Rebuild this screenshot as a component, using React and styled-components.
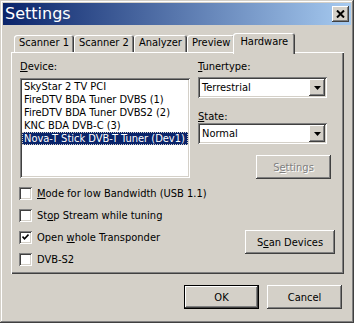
import styled, { createGlobalStyle } from 'styled-components';

const FONT = `"DejaVu Sans Condensed", "DejaVu Sans", sans-serif`;

const GlobalStyle = createGlobalStyle`
  * {
    box-sizing: border-box;
    margin: 0;
    padding: 0;
  }

  body {
    font-family: ${FONT};
    font-stretch: condensed;
    font-size: 11px;
    background: #d4d0c8;
    color: #000;
  }
`;

const raised = `
  box-shadow: inset -1px -1px #404040, inset 1px 1px #ffffff,
    inset -2px -2px #808080, inset 2px 2px #d4d0c8;
`;

const sunken = `
  box-shadow: inset 1px 1px #808080, inset -1px -1px #ffffff,
    inset 2px 2px #404040, inset -2px -2px #d4d0c8;
`;

const Window = styled.div`
  width: 354px;
  height: 323px;
  padding: 3px;
  background: #d4d0c8;
  display: flex;
  flex-direction: column;
  box-shadow: inset -1px -1px #404040, inset 1px 1px #d4d0c8,
    inset -2px -2px #808080, inset 2px 2px #ffffff;
`;

const TitleBar = styled.div`
  height: 22px;
  display: flex;
  align-items: center;
  justify-content: space-between;
  padding: 0 2px 0 2px;
  background: linear-gradient(to right, #0a246a, #a6caf0);
`;

const Title = styled.span`
  font-family: "DejaVu Sans", sans-serif;
  font-stretch: normal;
  font-size: 16px;
  color: #fff;
  line-height: 22px;
`;

const CloseButton = styled.div`
  width: 17px;
  height: 16px;
  background: #d4d0c8;
  display: flex;
  align-items: center;
  justify-content: center;
  ${raised}
`;

const Body = styled.div`
  flex: 1;
  padding: 8px 7px 0 8px;
  display: flex;
  flex-direction: column;
`;

const TabStrip = styled.div`
  height: 19px;
  display: flex;
  align-items: flex-end;
  padding-left: 3px;
`;

const Tab = styled.div`
  position: relative;
  height: ${p => (p.$active ? '21px' : '17px')};
  margin: ${p => (p.$active ? '0 -2px -2px -2px' : '0')};
  z-index: ${p => (p.$active ? 2 : 1)};
  padding: ${p => (p.$active ? '2px 7px 0' : '1px 5px 0')};
  background: #d4d0c8;
  border-radius: 3px 3px 0 0;
  line-height: 14px;
  box-shadow: inset 1px 1px #ffffff, inset -1px 0 #404040, inset -2px 0 #808080;
  white-space: nowrap;
`;

const Panel = styled.div`
  height: 222px;
  padding: 8px 9px 0 9px;
  display: flex;
  flex-direction: column;
  box-shadow: inset 1px 1px #ffffff, inset -1px -1px #404040,
    inset -2px -2px #808080;
`;

const TopSection = styled.div`
  display: flex;
  gap: 8px;
`;

const LeftColumn = styled.div`
  width: 170px;
  display: flex;
  flex-direction: column;
`;

const RightColumn = styled.div`
  width: 133px;
  display: flex;
  flex-direction: column;
  align-items: flex-start;
`;

const Label = styled.div`
  height: 13px;
  line-height: 13px;
  margin-top: ${p => p.$top || 0}px;
  margin-bottom: ${p => p.$bottom || 0}px;
`;

const ListBox = styled.div`
  height: 100px;
  background: #fff;
  padding: 2px;
  overflow: hidden;
  ${sunken}
`;

const ListItem = styled.div`
  height: 13px;
  line-height: 13px;
  padding-left: 2px;
  white-space: nowrap;
  overflow: hidden;
  color: ${p => (p.$selected ? '#fff' : '#000')};
  background: ${p => (p.$selected ? '#0a246a' : 'transparent')};
  outline: ${p => (p.$selected ? '1px dotted #d4d0c8' : 'none')};
  outline-offset: -1px;
`;

const Combo = styled.div`
  width: 129px;
  height: 21px;
  background: #fff;
  padding: 2px;
  display: flex;
  align-items: center;
  ${sunken}
`;

const ComboText = styled.span`
  flex: 1;
  padding-left: 2px;
  line-height: 17px;
`;

const DropButton = styled.div`
  width: 16px;
  height: 17px;
  background: #d4d0c8;
  display: flex;
  align-items: center;
  justify-content: center;
  ${raised}
`;

const Button = styled.div`
  width: ${p => p.$width || 75}px;
  height: ${p => p.$height || 24}px;
  margin-top: ${p => p.$top || 0}px;
  align-self: ${p => p.$self || 'auto'};
  background: #d4d0c8;
  display: flex;
  align-items: center;
  justify-content: center;
  color: ${p => (p.$disabled ? '#808080' : '#000')};
  text-shadow: ${p => (p.$disabled ? '1px 1px #ffffff' : 'none')};
  ${raised}
  ${p =>
    p.$default &&
    `box-shadow: inset 0 0 0 1px #000, inset -2px -2px #404040, inset 2px 2px #ffffff,
      inset -3px -3px #808080, inset 3px 3px #d4d0c8;`}
`;

const BottomSection = styled.div`
  margin-top: 3px;
  display: flex;
  justify-content: space-between;
  align-items: flex-start;
`;

const CheckList = styled.div`
  display: flex;
  flex-direction: column;
  margin-left: -1px;
`;

const CheckRow = styled.div`
  height: 22px;
  display: flex;
  align-items: center;
  gap: 5px;
  white-space: nowrap;
`;

const CheckBox = styled.div`
  width: 13px;
  height: 13px;
  background: #fff;
  display: flex;
  align-items: center;
  justify-content: center;
  ${sunken}
`;

const ButtonRow = styled.div`
  margin-top: 11px;
  padding-right: 2px;
  display: flex;
  justify-content: flex-end;
  gap: 8px;
`;

const Key = styled.span`
  text-decoration: underline;
`;

const Arrow = () => (
  <svg width="7" height="4" viewBox="0 0 7 4">
    <polygon points="0,0 7,0 3.5,4" fill="#000" />
  </svg>
);

const Check = () => (
  <svg width="7" height="7" viewBox="0 0 7 7">
    <polyline points="0.5,2.5 2.5,4.8 6.5,0.6" fill="none" stroke="#000" strokeWidth="1.6" />
  </svg>
);

const devices = [
  'SkyStar 2 TV PCI',
  'FireDTV BDA Tuner DVBS (1)',
  'FireDTV BDA Tuner DVBS2 (2)',
  'KNC BDA DVB-C (3)',
  'Nova-T Stick DVB-T Tuner (Dev1)',
];

const tabs = ['Scanner 1', 'Scanner 2', 'Analyzer', 'Preview', 'Hardware'];

export default function App() {
  return (
    <>
      <GlobalStyle />
      <Window>
        <TitleBar>
          <Title>Settings</Title>
          <CloseButton>
            <svg width="9" height="8" viewBox="0 0 9 8">
              <path d="M1 0.5 L8 7.5 M8 0.5 L1 7.5" stroke="#000" strokeWidth="2" />
            </svg>
          </CloseButton>
        </TitleBar>
        <Body>
          <TabStrip>
            {tabs.map(t => (
              <Tab key={t} $active={t === 'Hardware'}>{t}</Tab>
            ))}
          </TabStrip>
          <Panel>
            <TopSection>
              <LeftColumn>
                <Label $bottom={5}><Key>D</Key>evice:</Label>
                <ListBox>
                  {devices.map((d, i) => (
                    <ListItem key={d} $selected={i === 4}>{d}</ListItem>
                  ))}
                </ListBox>
              </LeftColumn>
              <RightColumn>
                <Label $bottom={4}><Key>T</Key>unertype:</Label>
                <Combo>
                  <ComboText>Terrestrial</ComboText>
                  <DropButton><Arrow /></DropButton>
                </Combo>
                <Label $top={12}><Key>S</Key>tate:</Label>
                <Combo>
                  <ComboText>Normal</ComboText>
                  <DropButton><Arrow /></DropButton>
                </Combo>
                <Button $top={11} $self="flex-end" $disabled>S<Key>e</Key>ttings</Button>
              </RightColumn>
            </TopSection>
            <BottomSection>
              <CheckList>
                <CheckRow><CheckBox /><span><Key>M</Key>ode for low Bandwidth (USB 1.1)</span></CheckRow>
                <CheckRow><CheckBox /><span>St<Key>o</Key>p Stream while tuning</span></CheckRow>
                <CheckRow><CheckBox><Check /></CheckBox><span>Open <Key>w</Key>hole Transponder</span></CheckRow>
                <CheckRow><CheckBox /><span>DVB-S2</span></CheckRow>
              </CheckList>
              <Button $width={90} $top={48}>S<Key>c</Key>an Devices</Button>
            </BottomSection>
          </Panel>
          <ButtonRow>
            <Button $default>OK</Button>
            <Button>Cancel</Button>
          </ButtonRow>
        </Body>
      </Window>
    </>
  );
}
